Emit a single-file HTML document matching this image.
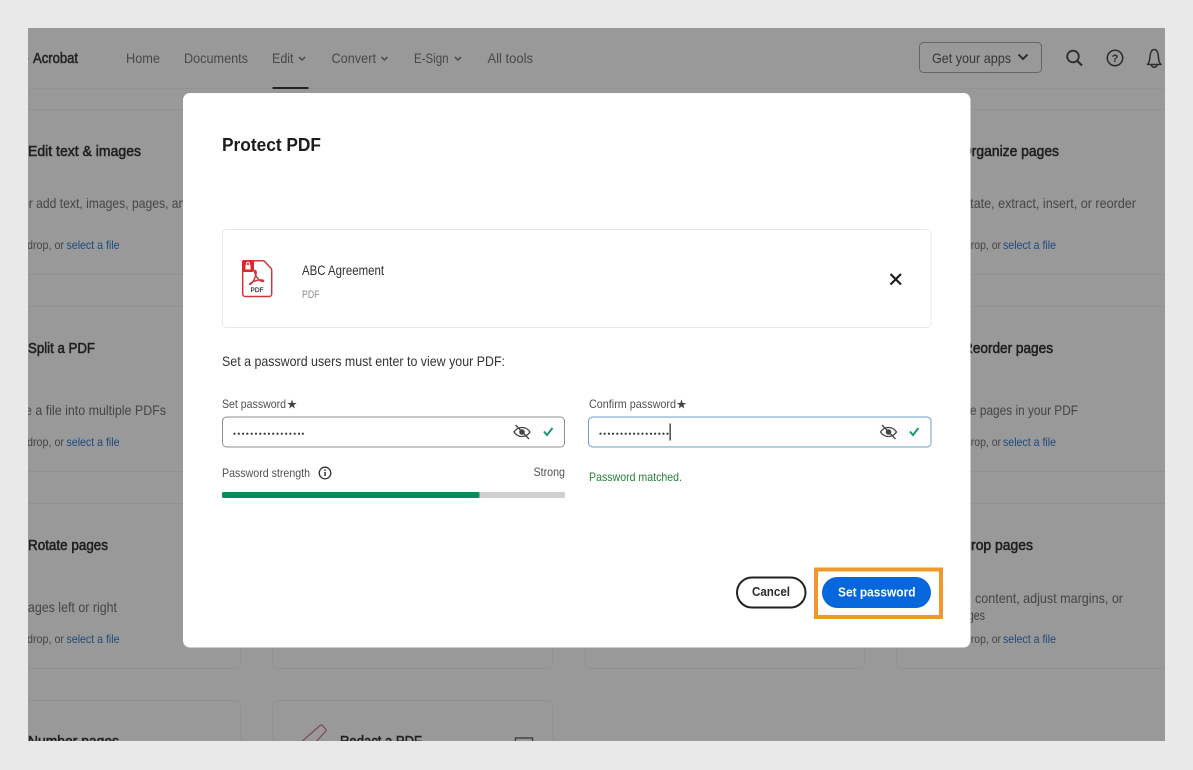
<!DOCTYPE html>
<html lang="en">
<head>
<meta charset="utf-8">
<title>Protect PDF</title>
<style>
html,body{margin:0;padding:0;background:#e9e9e9;width:1193px;height:770px;overflow:hidden}
svg{display:block;filter:blur(.3px)}
text{font-family:"Liberation Sans",sans-serif}
.nav{font-size:14px;fill:#484848}
.t{font-size:15px;fill:#1f1f1f;stroke:#1f1f1f;stroke-width:.55px}
.d{font-size:14px;fill:#454545}
.s{font-size:12px;fill:#454545}
.l{font-size:12px;fill:#1d4a7e}
.lab{font-size:12px;fill:#505050}
.ln{fill:none;stroke:#919191;stroke-width:1}
</style>
</head>
<body>
<svg width="1193" height="770" viewBox="0 0 1193 770" xmlns="http://www.w3.org/2000/svg">
<defs><clipPath id="sc"><rect x="28" y="28" width="1137" height="713"/></clipPath></defs>
<rect width="1193" height="770" fill="#e9e9e9"/>
<g clip-path="url(#sc)">
<rect x="28" y="28" width="1137" height="713" fill="#999999"/>
<line x1="28" y1="88.500" x2="1165" y2="88.500" stroke="#939393"/>

<text x="21" y="63" font-size="14" fill="#222" textLength="8" lengthAdjust="spacingAndGlyphs">e</text>
<text x="33" y="63" font-size="14.500" fill="#242424" stroke="#242424" stroke-width=".55" textLength="45" lengthAdjust="spacingAndGlyphs">Acrobat</text>
<text class="nav" x="126" y="63" textLength="34" lengthAdjust="spacingAndGlyphs">Home</text>
<text class="nav" x="184" y="63" textLength="64" lengthAdjust="spacingAndGlyphs">Documents</text>
<text class="nav" x="272" y="63" textLength="21.500" lengthAdjust="spacingAndGlyphs">Edit</text>
<path d="M299 57l3 3 3-3" fill="none" stroke="#484848" stroke-width="1.500"/>
<text class="nav" x="331.500" y="63" textLength="44.500" lengthAdjust="spacingAndGlyphs">Convert</text>
<path d="M381.500 57l3 3 3-3" fill="none" stroke="#484848" stroke-width="1.500"/>
<text class="nav" x="414" y="63" textLength="34.500" lengthAdjust="spacingAndGlyphs">E-Sign</text>
<path d="M455 57l3 3 3-3" fill="none" stroke="#484848" stroke-width="1.500"/>
<text class="nav" x="487.500" y="63" textLength="45.500" lengthAdjust="spacingAndGlyphs">All tools</text>
<rect x="272.500" y="87" width="36" height="2" fill="#222"/>

<rect x="919.500" y="42.500" width="122" height="30" rx="4" fill="none" stroke="#666"/>
<text x="932" y="63" font-size="14" fill="#363636" textLength="79" lengthAdjust="spacingAndGlyphs">Get your apps</text>
<path d="M1018.500 54.500l4.500 4.500 4.500-4.500" fill="none" stroke="#2f2f2f" stroke-width="2"/>
<circle cx="1073" cy="56.500" r="5.800" fill="none" stroke="#2c2c2c" stroke-width="1.800"/>
<line x1="1077.300" y1="61" x2="1082" y2="65.500" stroke="#2c2c2c" stroke-width="2.200"/>
<circle cx="1115" cy="58" r="7.700" fill="none" stroke="#2c2c2c" stroke-width="1.500"/>
<text x="1115" y="62" font-size="11" font-weight="700" fill="#2c2c2c" text-anchor="middle">?</text>
<path d="M1147.500 64.500h13.500c-1.800-1.800-2.300-3.500-2.500-6.500-.2-4-1.300-8.500-4.300-8.500s-4.200 4.500-4.400 8.500c-.2 3-.7 4.700-2.300 6.500z" fill="none" stroke="#2c2c2c" stroke-width="1.500" stroke-linejoin="round"/>
<path d="M1151.500 65a2.800 2.800 0 0 0 5.500 0" fill="none" stroke="#2c2c2c" stroke-width="1.500"/>

<rect class="ln" x="10" y="109.500" width="230.500" height="165" rx="5"/>
<rect class="ln" x="10" y="306.500" width="230.500" height="165" rx="5"/>
<rect class="ln" x="10" y="503.500" width="230.500" height="165" rx="5"/>
<rect class="ln" x="10" y="700.500" width="230.500" height="60" rx="5"/>
<rect class="ln" x="272.500" y="503.500" width="280" height="165" rx="5"/>
<rect class="ln" x="272.500" y="700.500" width="280" height="60" rx="5"/>
<rect class="ln" x="585" y="503.500" width="279.500" height="165" rx="5"/>
<rect class="ln" x="896.500" y="109.500" width="285" height="165" rx="5"/>
<rect class="ln" x="896.500" y="306.500" width="285" height="165" rx="5"/>
<rect class="ln" x="896.500" y="503.500" width="285" height="165" rx="5"/>

<text class="t" x="28" y="156" textLength="113" lengthAdjust="spacingAndGlyphs">Edit text &amp; images</text>
<text class="d" x="22" y="208" textLength="170" lengthAdjust="spacingAndGlyphs">or add text, images, pages, and</text>
<text class="s" x="27" y="249" textLength="37" lengthAdjust="spacingAndGlyphs">drop, or</text>
<text class="l" x="66.500" y="249" textLength="53" lengthAdjust="spacingAndGlyphs">select a file</text>

<text class="t" x="28" y="353" textLength="67" lengthAdjust="spacingAndGlyphs">Split a PDF</text>
<text class="d" x="25" y="415" textLength="141" lengthAdjust="spacingAndGlyphs">e a file into multiple PDFs</text>
<text class="s" x="27" y="446" textLength="37" lengthAdjust="spacingAndGlyphs">drop, or</text>
<text class="l" x="66.500" y="446" textLength="53" lengthAdjust="spacingAndGlyphs">select a file</text>

<text class="t" x="28" y="550" textLength="80" lengthAdjust="spacingAndGlyphs">Rotate pages</text>
<text class="d" x="21" y="612" textLength="96" lengthAdjust="spacingAndGlyphs">pages left or right</text>
<text class="s" x="27" y="643" textLength="37" lengthAdjust="spacingAndGlyphs">drop, or</text>
<text class="l" x="66.500" y="643" textLength="53" lengthAdjust="spacingAndGlyphs">select a file</text>

<text class="t" x="28" y="746" textLength="91" lengthAdjust="spacingAndGlyphs">Number pages</text>
<text class="t" x="340" y="746" textLength="82" lengthAdjust="spacingAndGlyphs">Redact a PDF</text>
<path d="M299 744l21-18.500q1.500-1 2.500 0l3 3.500q1 1.200 0 2.500l-13 14" fill="none" stroke="#82445f" stroke-width="1.200"/>
<rect x="515.500" y="738" width="17" height="14" fill="none" stroke="#444" stroke-width="1.500"/>

<text class="t" x="961" y="156" textLength="98" lengthAdjust="spacingAndGlyphs">Organize pages</text>
<text class="d" x="954" y="208" textLength="182" lengthAdjust="spacingAndGlyphs">Rotate, extract, insert, or reorder</text>
<text class="s" x="965" y="249" textLength="36" lengthAdjust="spacingAndGlyphs">drop, or</text>
<text class="l" x="1003" y="249" textLength="53" lengthAdjust="spacingAndGlyphs">select a file</text>

<text class="t" x="963" y="353" textLength="90" lengthAdjust="spacingAndGlyphs">Reorder pages</text>
<text class="d" x="970" y="415" textLength="108" lengthAdjust="spacingAndGlyphs">e pages in your PDF</text>
<text class="s" x="965" y="446" textLength="36" lengthAdjust="spacingAndGlyphs">drop, or</text>
<text class="l" x="1003" y="446" textLength="53" lengthAdjust="spacingAndGlyphs">select a file</text>

<text class="t" x="961" y="550" textLength="72" lengthAdjust="spacingAndGlyphs">Crop pages</text>
<text class="d" x="975" y="603" textLength="148" lengthAdjust="spacingAndGlyphs">content, adjust margins, or</text>
<text class="d" x="956" y="620" textLength="29" lengthAdjust="spacingAndGlyphs">pages</text>
<text class="s" x="965" y="643" textLength="36" lengthAdjust="spacingAndGlyphs">drop, or</text>
<text class="l" x="1003" y="643" textLength="53" lengthAdjust="spacingAndGlyphs">select a file</text>
</g>

<rect x="183" y="93" width="787.500" height="554.500" rx="7" fill="#fff"/>
<text x="222" y="151" font-size="18.500" font-weight="700" fill="#1c1c1c" textLength="99" lengthAdjust="spacingAndGlyphs">Protect PDF</text>

<rect x="222.500" y="229.500" width="708.500" height="98" rx="4" fill="#fff" stroke="#e8e8e8"/>

<path d="M245.500 260.800h17.500q1 0 1.800.8l6 6.400q.9.900.9 1.800v24.200a2.500 2.500 0 0 1-2.500 2.500h-24a2.500 2.500 0 0 1-2.500-2.500v-30.700a2.500 2.500 0 0 1 2.800-2.500z" fill="#fff" stroke="#d0353c" stroke-width="1.500"/>
<rect x="242" y="260" width="12" height="12" rx="2" fill="#e0242d"/>
<rect x="245.500" y="265" width="5" height="4.500" fill="#fff"/>
<path d="M246.500 265v-1.200a1.500 1.500 0 0 1 3 0v1.200" fill="none" stroke="#fff" stroke-width="1"/>
<path d="M250 284.500c2.500-1.200 5-5.500 6-10.500.4-2.200-.2-3.800-1-3.500-1 .4 0 4 2 7 1.500 2.200 3.600 3.800 5.500 4 1.500.2 1.500-1.200-.5-1.500-3-.4-7.500.8-10 2.300-1.800 1.100-2.800 2-2 2.200z" fill="none" stroke="#d0353c" stroke-width="1.500"/>
<text x="250.500" y="292" font-size="6.500" fill="#333" stroke="#333" stroke-width=".2" textLength="13" lengthAdjust="spacingAndGlyphs">PDF</text>

<text x="302" y="275" font-size="13.500" fill="#303030" textLength="82" lengthAdjust="spacingAndGlyphs">ABC Agreement</text>
<text x="302" y="298" font-size="11" fill="#8c8c8c" textLength="17.500" lengthAdjust="spacingAndGlyphs">PDF</text>
<path d="M890.500 274l10.500 10.500M901 274l-10.500 10.500" stroke="#1e1e1e" stroke-width="2.200" fill="none"/>

<text x="222" y="366" font-size="14" fill="#333" textLength="283" lengthAdjust="spacingAndGlyphs">Set a password users must enter to view your PDF:</text>

<text class="lab" x="222" y="408" textLength="64" lengthAdjust="spacingAndGlyphs">Set password</text>
<polygon points="292,399.500 293.200,403 296.700,403 293.900,405.100 294.900,408.500 292,406.400 289.100,408.500 290.100,405.100 287.300,403 290.800,403" fill="#444"/>
<text class="lab" x="589" y="408" textLength="87" lengthAdjust="spacingAndGlyphs">Confirm password</text>
<polygon points="681.500,399.500 682.700,403 686.200,403 683.400,405.100 684.400,408.500 681.500,406.400 678.600,408.500 679.600,405.100 676.800,403 680.300,403" fill="#444"/>

<rect x="222.500" y="417" width="342" height="30" rx="4" fill="#fff" stroke="#8f8f8f"/>
<g fill="#333">
<circle cx="234.500" cy="433.700" r="1.100"/><circle cx="238.800" cy="433.700" r="1.100"/><circle cx="243.100" cy="433.700" r="1.100"/><circle cx="247.400" cy="433.700" r="1.100"/><circle cx="251.700" cy="433.700" r="1.100"/><circle cx="256" cy="433.700" r="1.100"/><circle cx="260.300" cy="433.700" r="1.100"/><circle cx="264.600" cy="433.700" r="1.100"/><circle cx="268.900" cy="433.700" r="1.100"/><circle cx="273.200" cy="433.700" r="1.100"/><circle cx="277.500" cy="433.700" r="1.100"/><circle cx="281.800" cy="433.700" r="1.100"/><circle cx="286.100" cy="433.700" r="1.100"/><circle cx="290.400" cy="433.700" r="1.100"/><circle cx="294.700" cy="433.700" r="1.100"/><circle cx="299" cy="433.700" r="1.100"/><circle cx="302.800" cy="433.700" r="1.100"/>
</g>
<g fill="none" stroke="#444" stroke-width="1.300">
<path d="M514 432c4-6 12-6 16 0-4 6-12 6-16 0z"/>
<path d="M515.500 425l13.500 14"/>
</g>
<circle cx="522" cy="432" r="2.800" fill="#444"/>
<path d="M544 431.500l3 3.500 5.500-7" fill="none" stroke="#1d9a6c" stroke-width="2"/>

<rect x="588.500" y="417" width="342.500" height="30" rx="4" fill="#fff" stroke="#6a9fcb"/>
<g fill="#333">
<circle cx="600.500" cy="433.700" r="1.100"/><circle cx="604.700" cy="433.700" r="1.100"/><circle cx="608.900" cy="433.700" r="1.100"/><circle cx="613.100" cy="433.700" r="1.100"/><circle cx="617.300" cy="433.700" r="1.100"/><circle cx="621.500" cy="433.700" r="1.100"/><circle cx="625.700" cy="433.700" r="1.100"/><circle cx="629.900" cy="433.700" r="1.100"/><circle cx="634.100" cy="433.700" r="1.100"/><circle cx="638.300" cy="433.700" r="1.100"/><circle cx="642.500" cy="433.700" r="1.100"/><circle cx="646.700" cy="433.700" r="1.100"/><circle cx="650.900" cy="433.700" r="1.100"/><circle cx="655.100" cy="433.700" r="1.100"/><circle cx="659.300" cy="433.700" r="1.100"/><circle cx="663.500" cy="433.700" r="1.100"/><circle cx="667.500" cy="433.700" r="1.100"/>
</g>
<rect x="669.500" y="423.500" width="1.300" height="17" fill="#333"/>
<g fill="none" stroke="#444" stroke-width="1.300">
<path d="M880.500 432c4-6 12-6 16 0-4 6-12 6-16 0z"/>
<path d="M882 425l13.500 14"/>
</g>
<circle cx="888.500" cy="432" r="2.800" fill="#444"/>
<path d="M910 431.500l3 3.500 5.500-7" fill="none" stroke="#1d9a6c" stroke-width="2"/>

<text class="lab" x="222" y="477" textLength="88" lengthAdjust="spacingAndGlyphs">Password strength</text>
<circle cx="325" cy="473" r="5.800" fill="none" stroke="#333" stroke-width="1.300"/>
<rect x="324.300" y="472" width="1.500" height="4" fill="#333"/>
<rect x="324.300" y="469.500" width="1.500" height="1.500" fill="#333"/>
<text class="lab" x="533.500" y="476" textLength="31.500" lengthAdjust="spacingAndGlyphs">Strong</text>
<rect x="222" y="492" width="343" height="6" rx="1.500" fill="#cfcfcf"/>
<rect x="222" y="492" width="257.500" height="6" rx="1.500" fill="#0c8a5c"/>
<text x="589" y="481" font-size="12" fill="#27813a" textLength="93" lengthAdjust="spacingAndGlyphs">Password matched.</text>

<rect x="737" y="577.500" width="68.500" height="30" rx="15" fill="#fff" stroke="#222" stroke-width="2"/>
<text x="752" y="596" font-size="13" font-weight="700" fill="#2c2c2c" textLength="38" lengthAdjust="spacingAndGlyphs">Cancel</text>
<rect x="816" y="569.500" width="125" height="47.500" fill="none" stroke="#f0992a" stroke-width="4"/>
<rect x="822" y="577" width="109" height="31" rx="15.500" fill="#0666dc"/>
<text x="838" y="596.500" font-size="13" font-weight="700" fill="#fff" textLength="77.500" lengthAdjust="spacingAndGlyphs">Set password</text>
</svg>
</body>
</html>
